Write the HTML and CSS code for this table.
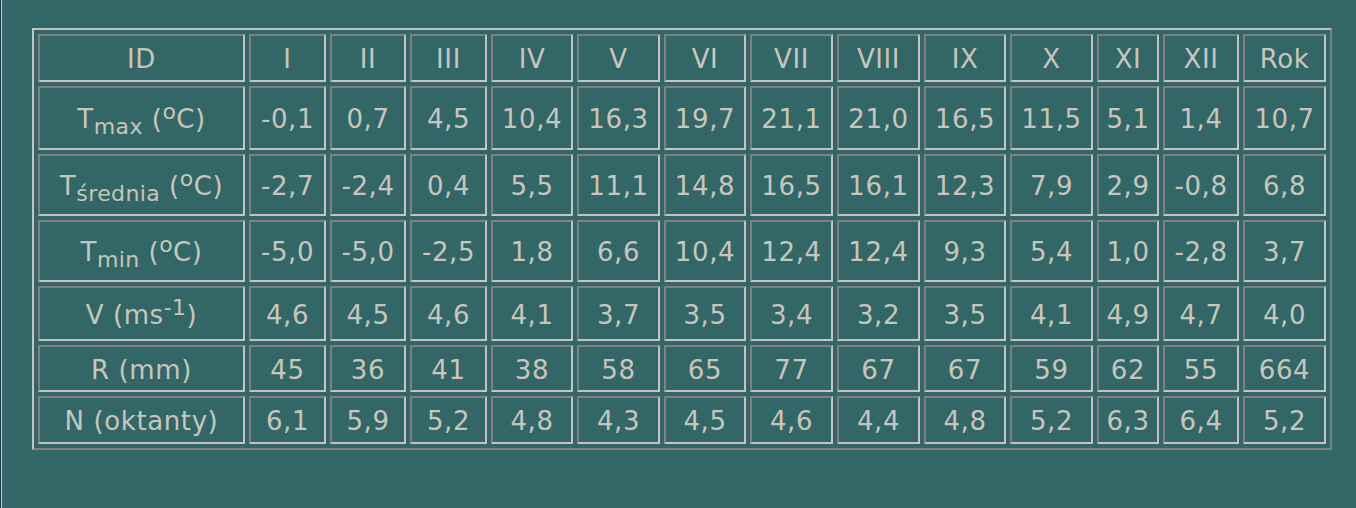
FILE: index.html
```html
<!DOCTYPE html>
<html lang="pl">
<head>
<meta charset="utf-8">
<title>Klimat</title>
<link rel="stylesheet" href="styles.css">
</head>
<body>
<div class="frame">
  <div class="page">
    <table class="climate">
      <tr class="r-head">
        <td class="c-id">ID</td>
        <td class="c-1">I</td>
        <td class="c-2">II</td>
        <td class="c-3">III</td>
        <td class="c-4">IV</td>
        <td class="c-5">V</td>
        <td class="c-6">VI</td>
        <td class="c-7">VII</td>
        <td class="c-8">VIII</td>
        <td class="c-9">IX</td>
        <td class="c-10">X</td>
        <td class="c-11">XI</td>
        <td class="c-12">XII</td>
        <td class="c-rok">Rok</td>
      </tr>
      <tr class="r-tmax">
        <td>T<sub>max</sub> (<sup>o</sup>C)</td>
        <td>-0,1</td><td>0,7</td><td>4,5</td><td>10,4</td><td>16,3</td><td>19,7</td><td>21,1</td><td>21,0</td><td>16,5</td><td>11,5</td><td>5,1</td><td>1,4</td><td>10,7</td>
      </tr>
      <tr class="r-tsr">
        <td>T<sub>średnia</sub> (<sup>o</sup>C)</td>
        <td>-2,7</td><td>-2,4</td><td>0,4</td><td>5,5</td><td>11,1</td><td>14,8</td><td>16,5</td><td>16,1</td><td>12,3</td><td>7,9</td><td>2,9</td><td>-0,8</td><td>6,8</td>
      </tr>
      <tr class="r-tmin">
        <td>T<sub>min</sub> (<sup>o</sup>C)</td>
        <td>-5,0</td><td>-5,0</td><td>-2,5</td><td>1,8</td><td>6,6</td><td>10,4</td><td>12,4</td><td>12,4</td><td>9,3</td><td>5,4</td><td>1,0</td><td>-2,8</td><td>3,7</td>
      </tr>
      <tr class="r-v">
        <td>V (ms<sup>-1</sup>)</td>
        <td>4,6</td><td>4,5</td><td>4,6</td><td>4,1</td><td>3,7</td><td>3,5</td><td>3,4</td><td>3,2</td><td>3,5</td><td>4,1</td><td>4,9</td><td>4,7</td><td>4,0</td>
      </tr>
      <tr class="r-r">
        <td>R (mm)</td>
        <td>45</td><td>36</td><td>41</td><td>38</td><td>58</td><td>65</td><td>77</td><td>67</td><td>67</td><td>59</td><td>62</td><td>55</td><td>664</td>
      </tr>
      <tr class="r-n">
        <td>N (oktanty)</td>
        <td>6,1</td><td>5,9</td><td>5,2</td><td>4,8</td><td>4,3</td><td>4,5</td><td>4,6</td><td>4,4</td><td>4,8</td><td>5,2</td><td>6,3</td><td>6,4</td><td>5,2</td>
      </tr>
    </table>
  </div>
</div>
</body>
</html>
```

FILE: styles.css
```css
html, body {
  margin: 0;
  padding: 0;
  height: 100%;
  background: #336666;
}

.frame {
  height: 100%;
  box-sizing: border-box;
  border-left: 1px solid #1c3846;
}

.page {
  height: 100%;
  box-sizing: border-box;
  border-left: 1px solid #c8d0d8;
  padding: 28px 0 0 30px;
}

.climate {
  box-sizing: border-box;
  width: 1300px;
  table-layout: fixed;
  border-collapse: separate;
  border-spacing: 4px;
  border: 2px solid;
  border-color: #c4c4c4 #808080 #808080 #c4c4c4;
  font-family: "DejaVu Sans", Verdana, sans-serif;
  font-size: 26px;
  letter-spacing: 0.6px;
  color: #c8c6bc;
}

.climate td {
  box-sizing: border-box;
  border: 2px solid;
  border-color: #808080 #c4c4c4 #c4c4c4 #808080;
  padding: 2px 1px 0;
  line-height: 30px;
  text-align: center;
  vertical-align: middle;
  white-space: nowrap;
  overflow: hidden;
}

.climate sub,
.climate sup {
  font-size: 22px;
  line-height: 0;
  letter-spacing: 0.4px;
}

.climate sub { vertical-align: -6px; }
.climate sup { vertical-align: 9px; }

.c-id { width: 207px; }
.c-1 { width: 77px; }
.c-2 { width: 76px; }
.c-3 { width: 77px; }
.c-4 { width: 82px; }
.c-5 { width: 83px; }
.c-6 { width: 82px; }
.c-7 { width: 83px; }
.c-8 { width: 83px; }
.c-9 { width: 82px; }
.c-10 { width: 83px; }
.c-11 { width: 62px; }
.c-12 { width: 76px; }
.c-rok { width: 83px; }

.r-head { height: 48px; }
.r-tmax { height: 64px; }
.r-tsr { height: 62px; }
.r-tmin { height: 62px; }
.r-v { height: 55px; }
.r-r { height: 47px; }
.r-n { height: 48px; }
```
